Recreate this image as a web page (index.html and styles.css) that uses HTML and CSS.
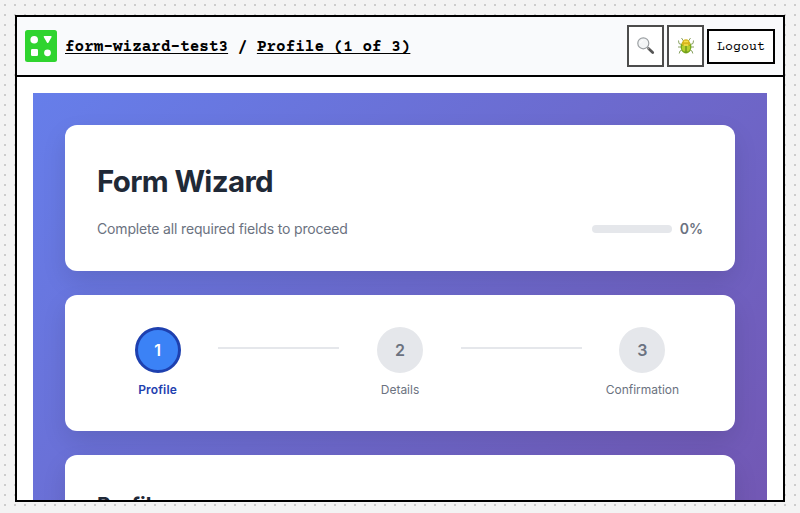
FILE: index.html
```html
<!DOCTYPE html>
<html lang="en">
<head>
<meta charset="utf-8">
<title>Form Wizard</title>
<link rel="stylesheet" href="styles.css">
</head>
<body>
<div class="frame">
  <header class="topbar">
    <svg class="logo" viewBox="0 0 32 32"><rect width="32" height="32" rx="2.5" fill="#2fd42f"/><g fill="#fff"><circle cx="9.200" cy="9.700" r="3.800"/><path d="M19.500 6h6.300q1.300 0 .7 1.200l-3 5.200q-.8 1.200-1.600 0l-3-5.200Q18.200 6 19.500 6z"/><rect x="6" y="19" width="7" height="7" rx="1.200"/><circle cx="22.500" cy="22.800" r="3.400"/></g></svg>
    <nav class="crumbs"><a>form-wizard-test3</a> / <a>Profile (1 of 3)</a></nav>
    <div class="actions">
      <button class="tool"><svg width="18" height="18" viewBox="0 0 18 18"><path d="M11.500 11.500l4.200 4" stroke="#555" stroke-width="2.700" stroke-linecap="round"/><path d="M10 10l2 2" stroke="#999" stroke-width="1.500"/><circle cx="6.300" cy="6.300" r="5.500" fill="#f3f5f6" stroke="#9b9fa2" stroke-width="1.200"/><path d="M3.500 6a3 3 0 0 1 2.700-2.600" fill="none" stroke="#fff"/></svg></button>
      <button class="tool"><svg width="18" height="18" viewBox="0 0 18 18"><g fill="none" stroke="#8aa263" stroke-width="1"><path d="M6.500 4L4.500 1M11.500 4l2-3M4.500 7.500L2 6.500 1.500 3.500M13.500 7.500l2.500-1 .5-3M4 10H1M14 10h3M5 13l-2 1-.8 2.500M13 13l2 1 .8 2.500"/></g><ellipse cx="9" cy="10" rx="5.400" ry="6.500" fill="#79a91d"/><path d="M4.700 7q.8-4.700 4.300-4.700T13.300 7L12 9H6z" fill="#d8b51d"/><path d="M5 9q3-1.500 3.500 0v5.500q-2.700 0-3.500-2.500zM13 9q-3-1.500-3.500 0v5.500q2.700 0 3.500-2.500z" fill="#b5cf2d"/><path d="M7 4.500h4M7 8h4" stroke="#f5df4b" stroke-width="1.500"/><path d="M9 9v7" stroke="#62851d" stroke-width=".8"/></svg></button>
      <button class="logout">Logout</button>
    </div>
  </header>
  <main class="content">
    <div class="wizard">
      <section class="card intro">
        <h1>Form Wizard</h1>
        <div class="summary">
          <p>Complete all required fields to proceed</p>
          <div class="progress"><span class="track"></span><span class="percent">0%</span></div>
        </div>
      </section>
      <section class="card steps">
        <div class="step active"><span class="number">1</span><span class="label">Profile</span></div>
        <span class="connector"></span>
        <div class="step"><span class="number">2</span><span class="label">Details</span></div>
        <span class="connector"></span>
        <div class="step"><span class="number">3</span><span class="label">Confirmation</span></div>
      </section>
      <section class="card form">
        <h2>Profile</h2>
      </section>
    </div>
  </main>
</div>
</body>
</html>
```
FILE: styles.css
```css
* { box-sizing: border-box; }
body {
  margin: 0;
  height: 513px;
  padding: 15px 15px 11px;
  overflow: hidden;
  background: #f3f3f3 radial-gradient(circle, #ccc 1px, transparent 1px) 0 0 / 10px 10px;
  font-family: Inter, sans-serif;
}
.frame {
  height: 487px;
  border: 2px solid #000;
  background: #fff;
  overflow: hidden;
}
.topbar {
  display: flex;
  align-items: center;
  height: 60px;
  padding: 0 8px;
  border-bottom: 2px solid #000;
  background: #f9fafc;
}
.logo { width: 32px; height: 32px; margin-right: 8px; }
.crumbs {
  padding-top: 2px;
  font: bold 16px/24px "Courier Prime", "Liberation Mono", monospace;
  color: #000;
  white-space: pre;
}
.crumbs a { text-decoration: underline; text-decoration-thickness: 1px; text-underline-offset: 2px; text-decoration-skip-ink: none; }
.actions { display: flex; align-items: center; gap: 3px; margin-left: auto; }
button { margin: 0; border: 2px solid #000; background: #fff; }
.tool {
  display: flex;
  align-items: center;
  justify-content: center;
  width: 37px;
  height: 42px;
  padding: 0;
  border-color: #4c4c4c;
}
.logout {
  width: 68px;
  height: 35px;
  padding: 2px 0 0;
  color: #000;
  font: 13.333px "Courier Prime", "Liberation Mono", monospace;
}
.content { padding: 16px; }
.wizard {
  display: flex;
  flex-direction: column;
  gap: 24px;
  height: 780px;
  padding: 32px;
  background: linear-gradient(135deg, #667eea 0%, #764ba2 100%);
}
.card {
  padding: 32px;
  border-radius: 12px;
  background: #fff;
  box-shadow: 0 10px 25px rgba(0, 0, 0, .1);
}
.intro { height: 146px; }
h1 { margin: 0 0 13px; font-size: 29.5px; line-height: 48px; font-weight: 700; color: #1f2937; letter-spacing: -.66px; }
.summary { display: flex; align-items: center; justify-content: space-between; color: #6b7280; font-size: 14px; line-height: 21px; }
.summary p { margin: 0; letter-spacing: -.16px; }
.progress { display: flex; align-items: center; gap: 8px; }
.track { width: 80px; height: 8px; border-radius: 4px; background: #e5e7eb; }
.percent { font-weight: 600; }
.steps { display: flex; height: 136px; }
.step { flex: 1; display: flex; flex-direction: column; align-items: center; color: #6b7280; }
.number {
  display: flex;
  align-items: center;
  justify-content: center;
  width: 46px;
  height: 46px;
  border: 3px solid #e5e7eb;
  border-radius: 50%;
  background: #e5e7eb;
  font-size: 16px;
  font-weight: 600;
}
.label { margin-top: 8px; font-size: 12px; line-height: 18px; }
.active .number { border-color: #1e40af; background: #3b82f6; color: #fff; }
.active .label { color: #1e40af; font-weight: 600; letter-spacing: .15px; }
.connector { flex: 1; height: 2px; margin-top: 20px; background: #e5e7eb; }
.form { flex: 1; }
h2 { margin: 0; font-size: 21px; line-height: 37px; font-weight: 700; color: #1f2937; }
```
